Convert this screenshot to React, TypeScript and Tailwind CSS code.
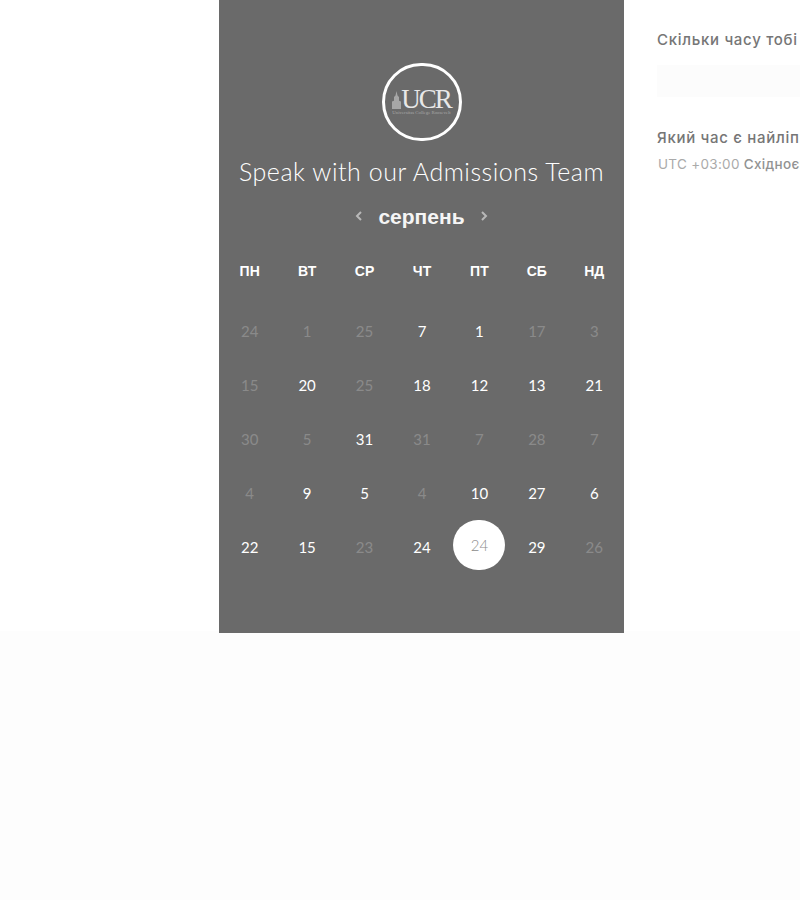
import React from 'react';

const weekDays = ['ПН', 'ВТ', 'СР', 'ЧТ', 'ПТ', 'СБ', 'НД'];

// [day, available]
const weeks: [number, boolean][][] = [
  [[24, false], [1, false], [25, false], [7, true], [1, true], [17, false], [3, false]],
  [[15, false], [20, true], [25, false], [18, true], [12, true], [13, true], [21, true]],
  [[30, false], [5, false], [31, true], [31, false], [7, false], [28, false], [7, false]],
  [[4, false], [9, true], [5, true], [4, false], [10, true], [27, true], [6, true]],
  [[22, true], [15, true], [23, false], [24, true], [24, true], [29, true], [26, false]],
];

const Logo = () => (
  <div className="flex h-[78px] w-[80px] flex-col items-center justify-center rounded-full border-[3px] border-white">
    <div className="flex items-end">
      <svg width="9" height="18" viewBox="0 0 9 24" preserveAspectRatio="none" className="mb-[1px] text-[#a6a6a6]">
        <path d="M4.5 0 L5.5 6 L7 8 V13 L9 14 V24 H0 V14 L2 13 V8 L3.5 6 Z" fill="currentColor" />
      </svg>
      <span className="font-['Liberation_Serif',serif] text-[27px] leading-[21px] tracking-[-2px] text-[#e8e8e8]">UCR</span>
    </div>
    <span className="whitespace-nowrap font-['Liberation_Serif',serif] text-[4.8px] leading-[6px] text-[#a8a8a8]">Universitas College Roosevelt</span>
  </div>
);

export default function App() {
  return (
    <div className="h-[900px] w-[800px] overflow-hidden bg-[#fdfdfd]">
      <div className="flex h-[631px] bg-white">
        <div className="w-[219px] shrink-0" />

        {/* Calendar panel */}
        <section className="flex h-[633px] w-[405px] shrink-0 flex-col items-center bg-[#6a6a6a] pt-[63px]">
          <Logo />
          <h1 className="mt-[13px] whitespace-nowrap font-['Lato',sans-serif] text-[25px] font-light leading-[34px] tracking-[0.53px] text-white">
            Speak with our Admissions Team
          </h1>
          <div className="mt-[12px] flex h-[34px] items-center gap-[15px]">
            <svg width="8" height="12" viewBox="0 0 8 12" fill="none" stroke="#b8b8b8" strokeWidth="2" className="-mt-[3px]">
              <path d="M6 2 L2 6 L6 10" />
            </svg>
            <span className="font-['Liberation_Sans',sans-serif] text-[21px] font-bold leading-[34px] text-[#f5f5f5]">серпень</span>
            <svg width="8" height="12" viewBox="0 0 8 12" fill="none" stroke="#b8b8b8" strokeWidth="2" className="-mt-[3px]">
              <path d="M2 2 L6 6 L2 10" />
            </svg>
          </div>

          <div className="mt-[29px] grid w-full grid-cols-7 pl-[2px] pr-[1px]">
            {weekDays.map((d) => (
              <div key={d} className="h-[16px] text-center font-['Liberation_Sans',sans-serif] text-[14px] font-bold leading-[16px] text-white">
                {d}
              </div>
            ))}
          </div>

          <div className="mt-[25px] grid w-full grid-cols-7 pl-[2px] pr-[1px]">
            {weeks.flat().map(([day, on], i) => {
              const selected = i === 32;
              return (
                <div key={i} className="flex h-[54px] items-center justify-center">
                  {selected ? (
                    <span className="mb-[4px] flex h-[50px] w-[52px] items-center justify-center rounded-full bg-white font-['Lato',sans-serif] text-[15px] font-light text-[#8c8c8c]">
                      {day}
                    </span>
                  ) : (
                    <span className={`font-['Lato',sans-serif] text-[15px] ${on ? 'text-white' : 'text-[#8a8a8a]'}`}>{day}</span>
                  )}
                </div>
              );
            })}
          </div>
        </section>

        {/* Right column, runs off the window */}
        <div className="w-[300px] shrink-0 pl-[33px] pt-[30px] font-['Inter',sans-serif]">
          <p className="whitespace-nowrap text-[15px] font-medium leading-[20px] tracking-[0.7px] text-[#767676]">Скільки часу тобі потрібно?</p>
          <div className="mt-[15px] flex h-[32px] items-center justify-center bg-[#fcfcfc] pl-[280px] text-[14px] text-[#b0b0b0]">
            <span className="whitespace-nowrap">30 хв</span>
          </div>
          <p className="mt-[31px] whitespace-nowrap text-[15px] font-medium leading-[20px] tracking-[0.7px] text-[#767676]">Який час є найліпшим?</p>
          <p className="mt-[6px] whitespace-nowrap pl-[1px] text-[13.5px] leading-[20px] tracking-[0.3px] text-[#aaaaaa]">
            UTC +03:00 <span className="font-medium text-[#929292]">Східноєвропейський час</span>
          </p>
        </div>
      </div>
    </div>
  );
}
